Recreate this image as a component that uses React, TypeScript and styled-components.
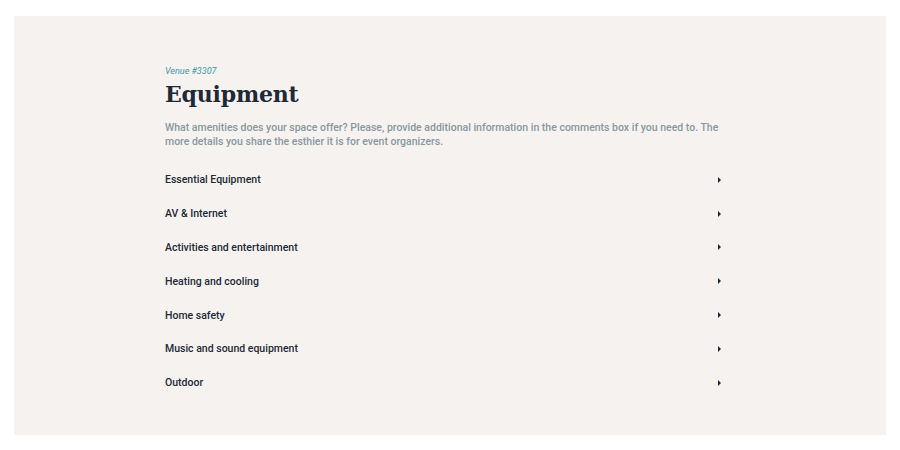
import styled, { createGlobalStyle } from 'styled-components';

const GlobalStyle = createGlobalStyle`
  body {
    margin: 0;
    background: #ffffff;
    font-family: Roboto, "Liberation Sans", sans-serif;
  }
`;

const Page = styled.div`
  padding: 16px 14px 15px 14px;
  height: 450px;
  box-sizing: border-box;
`;

const Panel = styled.div`
  background: #f6f2ef;
  height: 100%;
  padding: 49px 0 0 151px;
  box-sizing: border-box;
`;

const Content = styled.div`
  width: 572px;
`;

const Venue = styled.div`
  font-size: 9px;
  font-style: italic;
  color: #3a97a8;
  line-height: 12px;
`;

const Title = styled.h1`
  margin: 1px 0 0 0;
  font-family: "DejaVu Serif", "Liberation Serif", serif;
  font-weight: 700;
  font-size: 22px;
  line-height: 32px;
  color: #1f2a37;
  letter-spacing: -0.2px;
`;

const Description = styled.p`
  margin: 11px 0 14px 0;
  font-size: 10.5px;
  line-height: 14px;
  font-weight: 500;
  color: #86999f;
`;

const List = styled.div`
  display: flex;
  flex-direction: column;
`;

const Row = styled.div`
  display: flex;
  align-items: center;
  justify-content: space-between;
  height: 33.8px;
  padding-right: 16px;
  font-size: 10.5px;
  font-weight: 500;
  color: #222b36;
`;

const Caret = styled.span`
  width: 0;
  height: 0;
  border-top: 3px solid transparent;
  border-bottom: 3px solid transparent;
  border-left: 3.5px solid #17283a;
`;

const sections = [
  'Essential Equipment',
  'AV & Internet',
  'Activities and entertainment',
  'Heating and cooling',
  'Home safety',
  'Music and sound equipment',
  'Outdoor',
];

export default function App() {
  return (
    <>
      <GlobalStyle />
      <Page>
        <Panel>
          <Content>
            <Venue>Venue #3307</Venue>
            <Title>Equipment</Title>
            <Description>
              What amenities does your space offer? Please, provide additional information in the comments box if you need to. The more details you share the esthier it is for event organizers.
            </Description>
            <List>
              {sections.map((s) => (
                <Row key={s}>
                  <span>{s}</span>
                  <Caret />
                </Row>
              ))}
            </List>
          </Content>
        </Panel>
      </Page>
    </>
  );
}
